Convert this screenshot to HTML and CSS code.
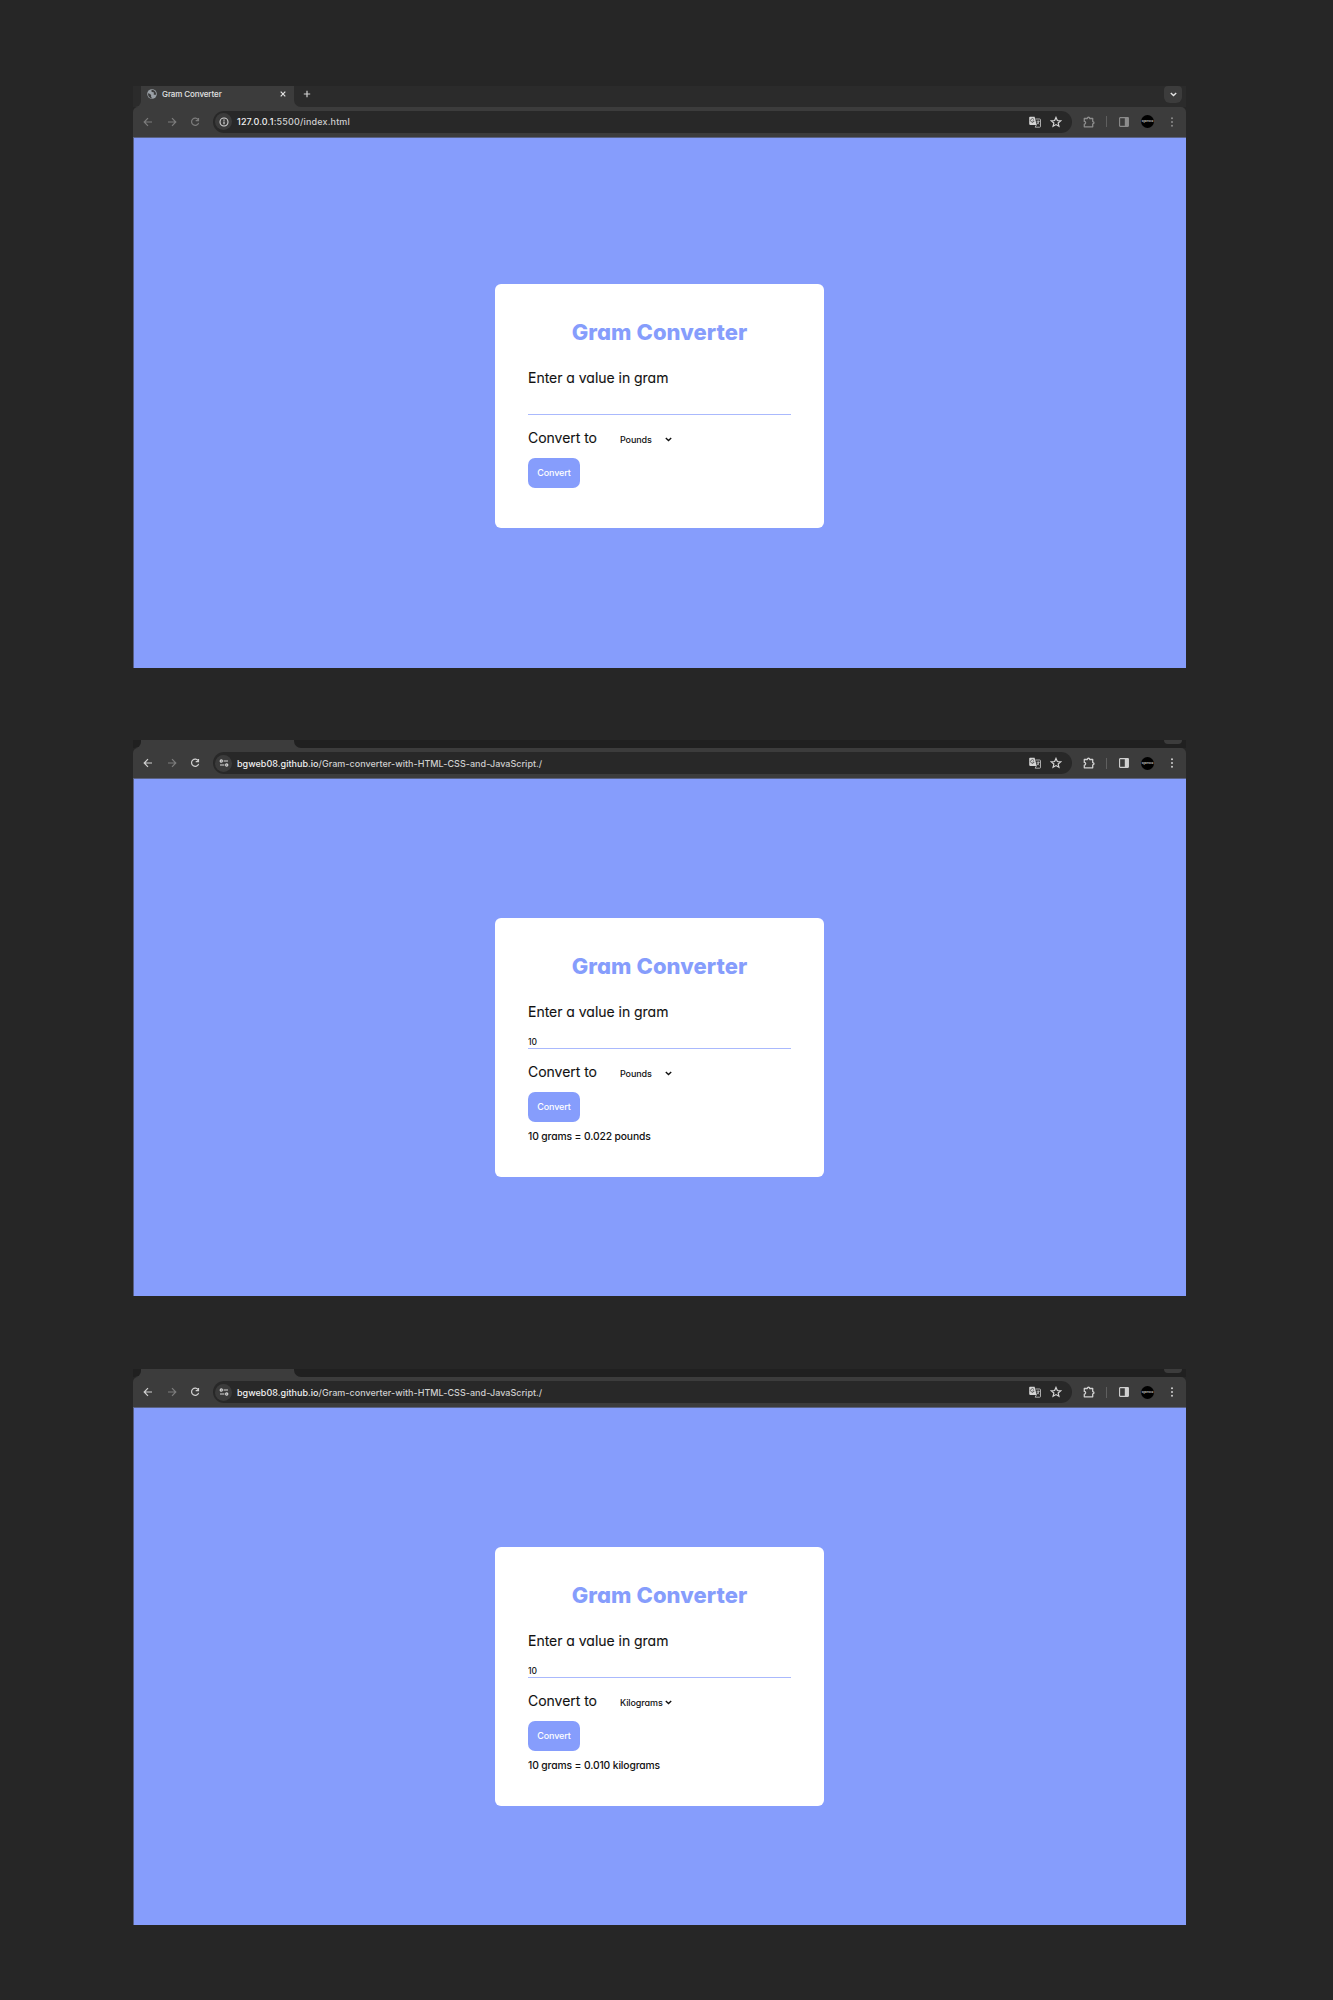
FILE: index.html
```
<!DOCTYPE html>
<html lang="en">
<head>
<meta charset="utf-8">
<title>Gram Converter</title>
<link rel="stylesheet" href="styles.css">
</head>
<body>
<svg width="0" height="0" class="defs">
  <defs>
    <symbol id="back" viewBox="0 0 10 10"><path d="M9 5H1.4M5 1.2 1.2 5 5 8.8" fill="none" stroke="currentColor" stroke-width="1.2"/></symbol>
    <symbol id="forward" viewBox="0 0 10 10"><path d="M1 5h7.6M5 1.2 8.8 5 5 8.8" fill="none" stroke="currentColor" stroke-width="1.2"/></symbol>
    <symbol id="reload" viewBox="0 0 10 10"><path d="M8.3 3A3.6 3.6 0 1 0 8.6 5.8M8.5.9v2.8H5.7" fill="none" stroke="currentColor" stroke-width="1.2"/></symbol>
    <symbol id="info" viewBox="0 0 10 10"><circle cx="5" cy="5" r="4" fill="none" stroke="currentColor" stroke-width="1.1"/><path d="M5 4.5v2.7M5 2.6v1.1" stroke="currentColor" stroke-width="1.2"/></symbol>
    <symbol id="tune" viewBox="0 0 10 10"><g fill="none" stroke="currentColor" stroke-width="1.2"><circle cx="2.3" cy="3" r="1.1"/><path d="M4.6 3h4.4M1 7h4.4"/><circle cx="7.7" cy="7" r="1.1"/></g></symbol>
    <symbol id="translate" viewBox="0 0 12 12"><path d="M1 .8h4.6l2.2 8.1H1a.8.8 0 0 1-.8-.8V1.6A.8.8 0 0 1 1 .8z" fill="currentColor"/><path d="M5 3.6a1.8 1.8 0 1 0 .1 1.5H3.6" fill="none" stroke="#444" stroke-width=".8"/><path d="M6.4 3h4.3a.8.8 0 0 1 .8.8v6.6a.8.8 0 0 1-.8.8H6.2l1.2-2.3M7.6 5.3h3M9.2 4.5v.8M10 5.3C9.7 6.6 9 7.4 8.1 8M8.2 6.3l1.9 2.1" fill="none" stroke="currentColor" stroke-width=".75"/></symbol>
    <symbol id="star" viewBox="0 0 12 12"><path d="m6 1.4 1.35 3.1 3.4.3-2.6 2.25.8 3.3L6 8.6l-2.95 1.75.8-3.3L1.25 4.8l3.4-.3z" fill="none" stroke="currentColor" stroke-width="1.2"/></symbol>
    <symbol id="puzzle" viewBox="0 0 12 12"><path d="M1.3 2.5h3c0-1.700 2.400-1.700 2.400 0h3v3.100c1.700 0 1.700 2.200 0 2.200v3H1.300V8.200c1.800 0 1.800-2.800 0-2.800z" fill="none" stroke="currentColor" stroke-width="1.3" stroke-linejoin="round"/></symbol>
    <symbol id="panel" viewBox="0 0 10 10"><rect x=".6" y=".6" width="8.8" height="8.8" rx=".6" fill="none" stroke="currentColor" stroke-width="1.1"/><path d="M5.8.6h3.6v8.8H5.8z" fill="currentColor"/></symbol>
    <symbol id="dots" viewBox="0 0 10 10"><g fill="currentColor"><circle cx="5" cy="1.2" r="1"/><circle cx="5" cy="5" r="1"/><circle cx="5" cy="8.8" r="1"/></g></symbol>
    <symbol id="chevron" viewBox="0 0 7 5"><path d="m.8 1 2.7 2.6L6.2 1" fill="none" stroke="currentColor" stroke-width="1.4"/></symbol>
    <symbol id="close" viewBox="0 0 6 6"><path d="m.7.7 4.6 4.6M5.3.7.7 5.3" stroke="currentColor" stroke-width="1.2"/></symbol>
    <symbol id="plus" viewBox="0 0 8 8"><path d="M4 .8v6.4M.8 4h6.4" stroke="currentColor" stroke-width="1.2"/></symbol>
    <symbol id="globe" viewBox="0 0 10 10"><circle cx="5" cy="5" r="4.8" fill="#9aa0a6"/><path d="M1 4.2c1.5.2 2 .7 2.9 1.5.6.6 0 1.2.2 2 .1.7 1 .8.9 1.5C2.7 9.2.8 7.4 1 4.2zM4.5 1c.2 1.3-.5 1.2.2 1.8.8.6 1.8.1 2.2 1 .3.9-.8 1.3.1 1.9.6.3 1.4 0 1.9.2C9.5 3.6 7.9.7 4.5 1z" fill="#3c3c3c"/></symbol>
  </defs>
</svg>

<section class="window first">
  <div class="strip">
    <div class="lead"></div>
    <div class="tab"><svg class="fav"><use href="#globe"/></svg><span class="tab-title">Gram Converter</span><svg class="x"><use href="#close"/></svg></div>
    <div class="rest"><svg class="new"><use href="#plus"/></svg><div class="search"><svg class="chev"><use href="#chevron"/></svg></div></div>
  </div>
  <div class="toolbar dim">
    <svg class="nav off"><use href="#back"/></svg><svg class="nav off"><use href="#forward"/></svg><svg class="nav off"><use href="#reload"/></svg>
    <div class="omnibox"><span class="site"><svg><use href="#info"/></svg></span><span class="url local"><b>127.0.0.1</b>:5500/index.html</span><svg class="act"><use href="#translate"/></svg><svg class="act"><use href="#star"/></svg></div>
    <svg class="ext"><use href="#puzzle"/></svg><i class="sep"></i><svg class="side"><use href="#panel"/></svg><span class="avatar"><span>bgweb08</span></span><svg class="more"><use href="#dots"/></svg>
  </div>
  <main class="page">
    <form class="card">
      <h1>Gram Converter</h1>
      <label class="prompt">Enter a value in gram</label>
      <input class="value" type="text">
      <div class="row"><span class="to">Convert to</span><span class="unit">Pounds</span><svg class="chev"><use href="#chevron"/></svg></div>
      <button type="button">Convert</button>
    </form>
  </main>
</section>

<section class="window second">
  <div class="strip"><div class="lead"></div><div class="tab"></div><div class="rest"><div class="search"></div></div></div>
  <div class="toolbar">
    <svg class="nav"><use href="#back"/></svg><svg class="nav off"><use href="#forward"/></svg><svg class="nav"><use href="#reload"/></svg>
    <div class="omnibox"><span class="site"><svg><use href="#tune"/></svg></span><span class="url"><b>bgweb08.github.io</b>/Gram-converter-with-HTML-CSS-and-JavaScript./</span><svg class="act"><use href="#translate"/></svg><svg class="act"><use href="#star"/></svg></div>
    <svg class="ext"><use href="#puzzle"/></svg><i class="sep"></i><svg class="side"><use href="#panel"/></svg><span class="avatar"><span>bgweb08</span></span><svg class="more"><use href="#dots"/></svg>
  </div>
  <main class="page">
    <form class="card">
      <h1>Gram Converter</h1>
      <label class="prompt">Enter a value in gram</label>
      <input class="value" type="text" value="10">
      <div class="row"><span class="to">Convert to</span><span class="unit">Pounds</span><svg class="chev"><use href="#chevron"/></svg></div>
      <button type="button">Convert</button>
      <p class="result">10 grams = 0.022 pounds</p>
    </form>
  </main>
</section>

<section class="window third">
  <div class="strip"><div class="lead"></div><div class="tab"></div><div class="rest"><div class="search"></div></div></div>
  <div class="toolbar">
    <svg class="nav"><use href="#back"/></svg><svg class="nav off"><use href="#forward"/></svg><svg class="nav"><use href="#reload"/></svg>
    <div class="omnibox"><span class="site"><svg><use href="#tune"/></svg></span><span class="url"><b>bgweb08.github.io</b>/Gram-converter-with-HTML-CSS-and-JavaScript./</span><svg class="act"><use href="#translate"/></svg><svg class="act"><use href="#star"/></svg></div>
    <svg class="ext"><use href="#puzzle"/></svg><i class="sep"></i><svg class="side"><use href="#panel"/></svg><span class="avatar"><span>bgweb08</span></span><svg class="more"><use href="#dots"/></svg>
  </div>
  <main class="page">
    <form class="card">
      <h1>Gram Converter</h1>
      <label class="prompt">Enter a value in gram</label>
      <input class="value" type="text" value="10">
      <div class="row"><span class="to">Convert to</span><span class="unit">Kilograms</span><svg class="chev"><use href="#chevron"/></svg></div>
      <button type="button">Convert</button>
      <p class="result">10 grams = 0.010 kilograms</p>
    </form>
  </main>
</section>
</body>
</html>
```
FILE: styles.css
```
* { box-sizing: border-box; }
body {
  margin: 0;
  height: 2000px;
  padding: 86px 0 0 133px;
  background: #262626;
  font-family: "Inter", sans-serif;
  display: flex;
  flex-direction: column;
  overflow: hidden;
}
svg { display: block; flex: none; overflow: visible; }
.defs { position: absolute; }

/* browser window */
.window { width: 1053px; display: flex; flex-direction: column; overflow: hidden; flex: none; }
.first { height: 582px; margin-bottom: 72px; }
.second { height: 555.5px; margin-bottom: 73.5px; }
.third { height: 555.5px; }
.strip { height: 8px; flex: none; display: flex; background: #3c3c3c; overflow: hidden; --bar: #202020; }
.first .strip { height: 21px; --bar: #2b2b2b; }
.lead { width: 8px; background: var(--bar); border-bottom-right-radius: 6px; }
.rest { flex: 1; display: flex; background: var(--bar); border-bottom-left-radius: 7px; }
.tab { width: 153px; background: #3c3c3c; color: #e3e3e3; display: flex; align-items: center; padding: 0 8px 6px 6px; }
.fav { width: 10px; height: 10px; }
.tab-title { flex: 1; padding-left: 5px; font-size: 8px; font-weight: 500; letter-spacing: -0.1px; white-space: nowrap; }
.x { width: 6px; height: 6px; }
.new { width: 8px; height: 8px; margin: 3.5px 0 0 9px; color: #d0d0d0; }
.search { width: 18px; height: 17px; margin: 0 4px 0 auto; border-radius: 4px 4px 6px 6px; background: #3c3c3c; color: #e3e3e3; display: flex; align-items: center; justify-content: center; }
.second .search, .third .search { height: 4px; border-radius: 0 0 6px 6px; }
.search .chev { width: 7px; height: 5px; }

.toolbar { height: 31px; flex: none; display: flex; align-items: center; padding: 0 9px 0 10px; background: #3c3c3c; border-radius: 5px 5px 0 0; color: #d0d0d0; border-bottom: 1px solid #5a6284; }
.first .toolbar { padding-bottom: 1px; }
.dim { color: #8c8c8c; }
.nav { width: 10px; height: 10px; margin-right: 13.5px; }
.off { color: #7c7c7c; }
.omnibox { width: 859px; height: 22px; flex: none; margin-left: -.5px; padding: 0 10px 0 2px; border-radius: 11px; background: #282828; display: flex; align-items: center; color: #d5d5d5; }
.site { width: 17px; height: 17px; border-radius: 50%; background: #3b3b3b; display: flex; align-items: center; justify-content: center; }
.site svg { width: 10px; height: 10px; }
.url { flex: 1; padding-left: 5px; font-size: 9px; letter-spacing: .03px; font-weight: 450; white-space: nowrap; color: #cfcfcf; }
.local { letter-spacing: .17px; }
.url b { font-weight: 500; color: #f0f0f0; }
.act { width: 12px; height: 12px; margin-left: 9px; }
.ext { width: 12px; height: 12px; margin-left: 11px; }
.sep { width: 1px; height: 11px; margin: 0 12px 0 11px; background: #5f5f5f; }
.side { width: 10px; height: 10px; }
.avatar { width: 13px; height: 13px; margin: 0 auto 0 12px; border-radius: 50%; background: #000; color: #bbb; display: flex; align-items: center; justify-content: center; flex: none; }
.avatar span { font-size: 2.5px; font-weight: 700; line-height: 3px; }
.more { width: 10px; height: 10px; }

/* converter */
.page { flex: 1; background: #869dfc; border-left: 1px solid #575f83; padding: 139px 0 0 361px; }
.first .page { padding-top: 146px; }
.card { width: 329px; height: 259px; margin: 0; padding: 32px 33px 0; border-radius: 6px; background: #fff; color: #111; display: flex; flex-direction: column; font-feature-settings: "cv11"; }
.first .card { height: 244px; }
h1 { margin: 0 0 20px; font-size: 22px; line-height: 33px; height: 32px; font-weight: 800; letter-spacing: .06px; color: #869dfc; text-align: center; white-space: nowrap; }
.prompt, .to { font-size: 14px; line-height: 20px; letter-spacing: -.03px; white-space: nowrap; -webkit-text-stroke: .1px; }
.value { width: 263px; height: 27px; padding: 13px 0 0; border: 0; border-bottom: 1px solid #aab9fd; outline: 0; background: none; font: 500 8.5px/13px "Inter", sans-serif; color: #111; }
.row { height: 20px; margin-top: 13px; display: flex; align-items: center; }
.to { width: 92px; }
.unit { width: 45px; font-size: 9px; font-weight: 500; letter-spacing: -.1px; line-height: 14px; padding-top: 3px; white-space: nowrap; }
.row .chev { width: 7px; height: 5px; margin-top: 3px; }
button { width: 52px; height: 30.5px; margin: 9.5px 0 0; padding: 0; border: 0; border-radius: 7px; background: #869dfc; color: #fff; font: 500 9px/14px "Inter", sans-serif; letter-spacing: -.1px; }
.result { margin: 6px 0 0; font-size: 10.3px; line-height: 16px; font-weight: 500; letter-spacing: -.12px; white-space: nowrap; }
```
